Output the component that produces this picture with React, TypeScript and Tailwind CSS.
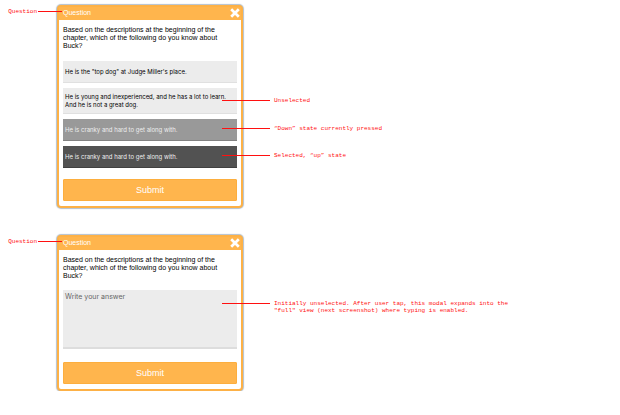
import type { ReactNode } from "react";

function CloseIcon() {
  return (
    <svg viewBox="0 0 10 10" className="size-[10px]" aria-hidden="true">
      <path d="M1.2 1.2 8.8 8.8M8.8 1.2 1.2 8.8" stroke="white" strokeWidth="2.7" fill="none" />
    </svg>
  );
}

/* Red callout pinned over the right part of the element it describes. */
function RightNote({ place, children }: { place: string; children: ReactNode }) {
  return (
    <div className={"pointer-events-none absolute left-[159px] flex w-max items-start gap-1 text-[#ff1010] " + place}>
      <span className="mt-[3px] w-12 border-t border-[#ff1010]" />
      <p className="font-['Liberation_Mono',monospace] text-[6px] leading-[7px]">{children}</p>
    </div>
  );
}

/* Red callout that reaches into the card's title from the left. */
function TitleNote({ children }: { children: ReactNode }) {
  return (
    <div className="pointer-events-none absolute right-full top-px -mr-[3px] flex items-center gap-px text-[#ff1010]">
      <span className="font-['Liberation_Mono',monospace] text-[6px] leading-[7px]">{children}</span>
      <span className="w-6 border-t border-[#ff1010]" />
    </div>
  );
}

function QuestionCard({ children }: { children: ReactNode }) {
  return (
    <section className="relative w-[186px] rounded-[4px] border-2 border-[#fdb146] bg-white shadow-[0_0_1px_1px_#b4c0cc]">
      <header className="relative flex h-[13px] items-center justify-between bg-[#ffb54d] pb-px pl-1 pr-px">
        <TitleNote>Question</TitleNote>
        <h2 className="text-[7px] font-normal leading-[8px] text-white">Question</h2>
        <button type="button" aria-label="Close">
          <CloseIcon />
        </button>
      </header>
      <div className="px-1 pb-[5px] pt-[6px]">
        <p className="text-[7px] leading-[8px] text-black">
          Based on the descriptions at the beginning of the
          <br />
          chapter, which of the following do you know about
          <br />
          Buck?
        </p>
        {children}
      </div>
    </section>
  );
}

function Option({
  tone,
  note,
  notePlace = "top-[6px]",
  children,
}: {
  tone: string;
  note?: string;
  notePlace?: string;
  children: ReactNode;
}) {
  return (
    <div className="relative">
      <button
        type="button"
        className={
          "flex min-h-[22px] w-full items-center border-b px-[2px] pb-1 pt-[5px] text-left font-['Inter',sans-serif] text-[6px] leading-[8px] " +
          tone
        }
      >
        <span className="whitespace-nowrap">{children}</span>
      </button>
      {note && <RightNote place={notePlace}>{note}</RightNote>}
    </div>
  );
}

function SubmitButton() {
  return (
    <button
      type="button"
      className="block h-[22px] w-full rounded-[1px] border border-[#fcae3e] bg-[#ffb54d] pb-px text-center text-[9px] leading-[10px] text-white"
    >
      Submit
    </button>
  );
}

const idle = "border-[#e0e0e0] bg-[#ececec] text-black";

export default function App() {
  return (
    <main className="flex flex-col gap-[27px] bg-white pl-[57px] pt-[5px] font-['Liberation_Sans',Arial,sans-serif]">
      <QuestionCard>
        <div className="mb-[11px] mt-[11px] flex flex-col gap-[5px]">
          <Option tone={idle}>He is the "top dog" at Judge Miller's place.</Option>
          <Option tone={idle} note="Unselected" notePlace="top-[9px]">
            He is young and inexperienced, and he has a lot to learn.
            <br />
            And he is not a great dog.
          </Option>
          <Option tone="border-[#828282] bg-[#999999] text-[#eeeeee]" note="“Down” state currently pressed">
            He is cranky and hard to get along with.
          </Option>
          <Option tone="border-[#404040] bg-[#525252] text-[#eeeeee]" note="Selected, “up” state">
            He is cranky and hard to get along with.
          </Option>
        </div>
        <SubmitButton />
      </QuestionCard>

      <QuestionCard>
        <div className="relative mb-[13px] mt-[10px]">
          <textarea
            aria-label="Your answer"
            placeholder="Write your answer"
            className="block h-[59px] w-full resize-none border-b-2 border-[#dddddd] bg-[#ececec] px-[2px] py-[3px] font-['Inter',sans-serif] text-[7px] leading-[8px] placeholder:text-[#666666]"
          />
          <RightNote place="top-[10px]">
            Initially unselected. After user tap, this modal expands into the
            <br />
            "full" view (next screenshot) where typing is enabled.
          </RightNote>
        </div>
        <SubmitButton />
      </QuestionCard>
    </main>
  );
}
